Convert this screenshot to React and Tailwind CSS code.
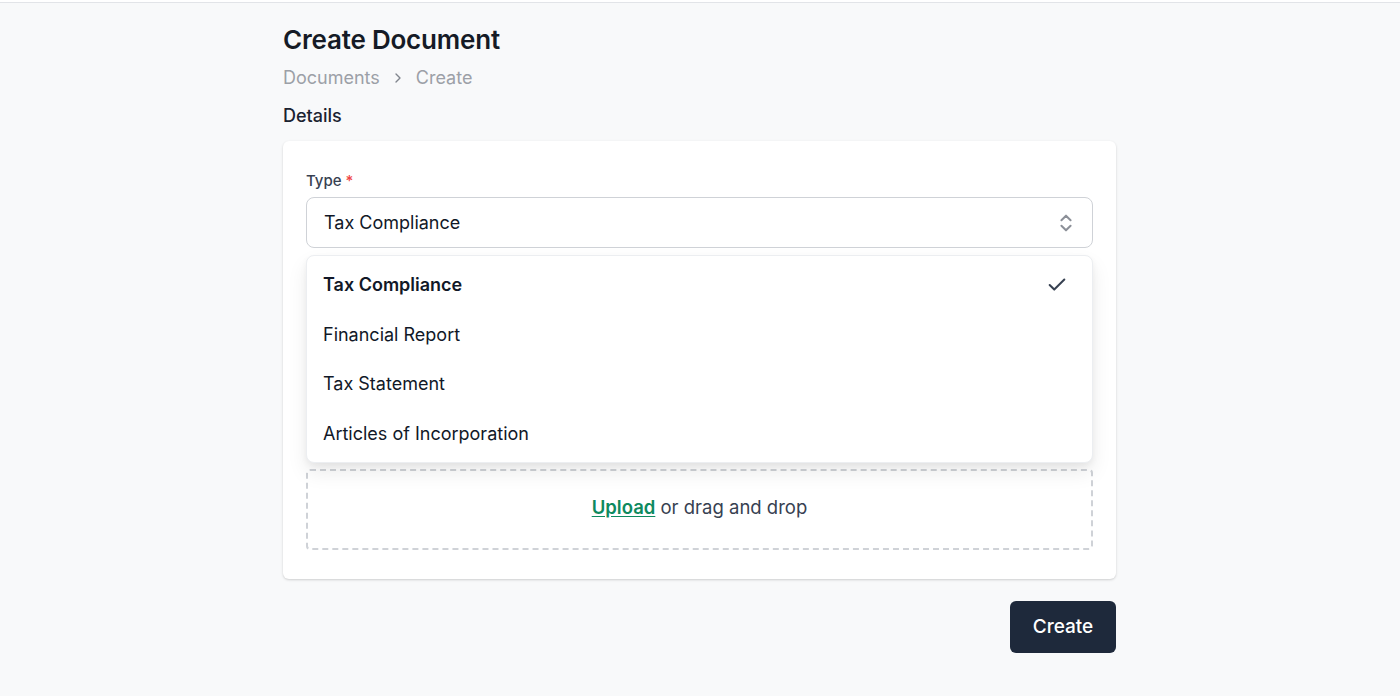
import { Check, ChevronsUpDown, ChevronRight } from "lucide-react"

const types = ["Tax Compliance", "Financial Report", "Tax Statement", "Articles of Incorporation"]

export default function App() {
  const selected = "Tax Compliance"
  return (
    <div className="min-h-[696px] bg-[#f8f9fa] font-['Inter',sans-serif] text-[#111827]">
      <div className="h-[3px] border-b border-[#e2e4e8] bg-white" />
      <div className="mx-auto w-[834px] pt-[21px]">
        <h1 className="text-[26px] font-semibold leading-[32px] tracking-[-0.2px] text-[#151b26]">Create Document</h1>
        <div className="mt-[9px] flex items-center gap-[10px] text-[18px] leading-[26px] text-[#9ca0a7]">
          <span>Documents</span>
          <ChevronRight size={16} strokeWidth={2} className="text-[#80858d]" />
          <span>Create</span>
        </div>
        <h2 className="mt-[12px] text-[18px] font-medium leading-[26px] text-[#1b2230]">Details</h2>

        <div className="mt-[12px] w-[833px] rounded-[6px] bg-white px-[23px] pt-[29px] pb-[29px] shadow-[0_1px_3px_rgba(0,0,0,0.12),0_1px_2px_rgba(0,0,0,0.06)]">
          <label className="block text-[15px] font-medium leading-[22px] text-[#374151]">
            Type <span className="text-[#ef4444]">*</span>
          </label>
          <div className="relative mt-[5px]">
            <button className="flex h-[51px] w-full items-center justify-between rounded-[8px] border border-[#cfd2d7] bg-white pl-[17px] pr-[15px] text-left text-[18px] text-[#111827]">
              <span>{selected}</span>
              <ChevronsUpDown size={22} strokeWidth={2.2} className="text-[#8c9098]" />
            </button>
            <ul className="absolute left-0 right-0 top-[58px] z-10 rounded-[8px] border border-[#eceef1] bg-white py-[4px] shadow-[0_10px_20px_rgba(0,0,0,0.08),0_3px_6px_rgba(0,0,0,0.05)]">
              {types.map((t) => (
                <li key={t} className="flex h-[49.5px] items-center justify-between pl-[16px] pr-[24px] text-[18px] text-[#111827]">
                  <span className={t === selected ? "font-semibold" : ""}>{t}</span>
                  {t === selected && <Check size={22} strokeWidth={2.2} className="text-[#374151]" />}
                </li>
              ))}
            </ul>
          </div>

          <div className="mt-[221px] flex h-[81px] items-center justify-center rounded-[4px] border-2 border-dashed border-[#cfd2d7] pb-[4px] text-[18.5px] text-[#374151]">
            <span>
              <a className="font-semibold text-[#0e8a5f] underline underline-offset-2">Upload</a> or drag and drop
            </span>
          </div>
        </div>

        <div className="mt-[22px] flex w-[833px] justify-end">
          <button className="h-[52px] w-[106px] rounded-[6px] bg-[#1e293b] text-[19px] font-medium text-white">Create</button>
        </div>
      </div>
    </div>
  )
}
